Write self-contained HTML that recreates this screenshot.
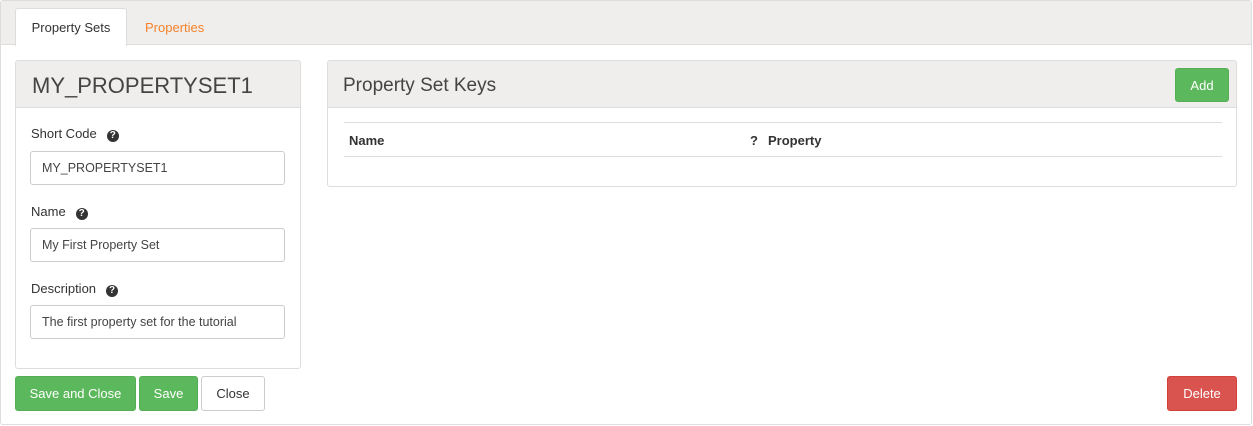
<!DOCTYPE html>
<html><head><style>
*{box-sizing:border-box;margin:0;padding:0}
body{width:1253px;height:426px;background:#fff;font-family:"Liberation Sans",sans-serif;font-size:13px;color:#333;position:relative;overflow:hidden}
.abs{position:absolute}
.outer{left:0;top:0;width:1252px;height:425px;border:1px solid #ddd;border-radius:3px}
.tabbar{left:1px;top:1px;width:1250px;height:44px;background:#efeeec;border-bottom:1px solid #ddd}
.tab{left:15px;top:8px;width:112px;height:38px;background:#fff;border:1px solid #ddd;border-bottom:none;border-radius:3px 3px 0 0;line-height:38px;text-align:center;font-size:13px;color:#333}
.tab2{left:145px;top:9px;line-height:38px;color:#f5822a;font-size:13px}
.panel{border:1px solid #ddd;border-radius:3px;background:#fff;overflow:hidden}
.ph{position:absolute;left:0;top:0;right:0;height:47px;background:#efeeec;border-bottom:1px solid #ddd}
.lbl{font-size:13px;color:#333}
.q{display:inline-block;width:12px;height:12px;border-radius:50%;background:#333;color:#fff;font-size:10px;font-weight:bold;text-align:center;line-height:12px;margin-left:10px;vertical-align:0}
.inp{width:255px;height:34px;border:1px solid #ccc;border-radius:3px;padding:0 11px;line-height:32px;font-size:12.5px;color:#444}
.btn{height:35px;border-radius:3px;line-height:33px;text-align:center;font-size:13px;border:1px solid transparent}
.g{background:#5cb85c;border-color:#55ae55;color:#fff}
</style></head><body>
<div class="abs outer"></div>
<div class="abs tabbar"></div>
<div class="abs tab">Property Sets</div>
<div class="abs tab2">Properties</div>

<div class="abs panel" style="left:15px;top:60px;width:286px;height:309px">
 <div class="ph"></div>
 <div class="abs" style="left:16px;top:12px;font-size:22px;color:#444">MY_PROPERTYSET1</div>
 <div class="abs lbl" style="left:15px;top:65px">Short Code<span class="q">?</span></div>
 <div class="abs inp" style="left:14px;top:90px">MY_PROPERTYSET1</div>
 <div class="abs lbl" style="left:15px;top:143px">Name<span class="q">?</span></div>
 <div class="abs inp" style="left:14px;top:167px">My First Property Set</div>
 <div class="abs lbl" style="left:15px;top:220px">Description<span class="q">?</span></div>
 <div class="abs inp" style="left:14px;top:244px">The first property set for the tutorial</div>
</div>

<div class="abs panel" style="left:327px;top:60px;width:910px;height:127px">
 <div class="ph"></div>
 <div class="abs" style="left:15px;top:14px;font-size:19px;color:#444">Property Set Keys</div>
 <div class="abs btn g" style="left:847px;top:7px;width:54px;height:34px">Add</div>
 <div class="abs" style="left:16px;top:61px;width:878px;border-top:1px solid #ddd"></div>
 <div class="abs" style="left:21px;top:72px;font-weight:bold;font-size:13px">Name</div>
 <div class="abs" style="left:422px;top:72px;font-weight:bold;font-size:13px">?</div>
 <div class="abs" style="left:440px;top:72px;font-weight:bold;font-size:13px">Property</div>
 <div class="abs" style="left:16px;top:95px;width:878px;border-top:1px solid #ddd"></div>
</div>

<div class="abs btn g" style="left:15px;top:376px;width:121px">Save and Close</div>
<div class="abs btn g" style="left:139px;top:376px;width:59px">Save</div>
<div class="abs btn" style="left:201px;top:376px;width:64px;border-color:#ccc;color:#333;background:#fff">Close</div>
<div class="abs btn" style="left:1167px;top:376px;width:70px;background:#d9534f;border-color:#d43f3a;color:#fff">Delete</div>
</body></html>
